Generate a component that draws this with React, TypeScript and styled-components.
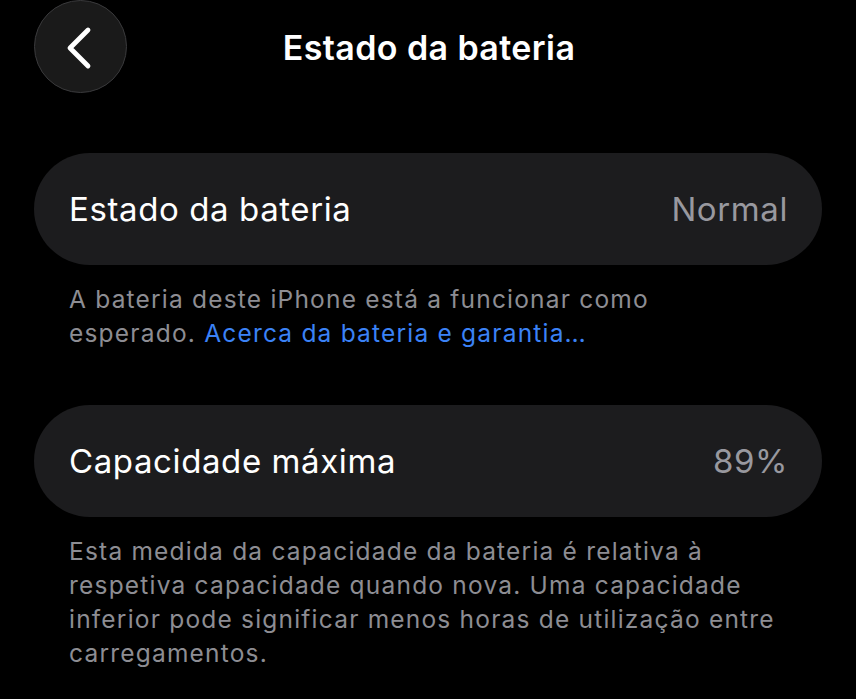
import React from 'react'
import styled, { createGlobalStyle } from 'styled-components'

const GlobalStyle = createGlobalStyle`
  html, body {
    margin: 0;
    padding: 0;
    background: #000;
  }
  body {
    font-family: Inter, "Noto Sans", "Liberation Sans", sans-serif;
    -webkit-font-smoothing: antialiased;
  }
`

function BackIcon() {
  return (
    <svg width="30" height="44" viewBox="0 0 30 44" fill="none">
      <path d="M24 4 L6 22 L24 40" stroke="#fff" strokeWidth="4.8" strokeLinecap="round" strokeLinejoin="round" />
    </svg>
  )
}

function App() {
  return (
    <Page>
      <GlobalStyle />
      <NavBar>
        <BackButton aria-label="Voltar">
          <BackIcon />
        </BackButton>
        <Title>Estado da bateria</Title>
      </NavBar>
      <Content>
        <Section>
          <Card>
            <Label>Estado da bateria</Label>
            <Value>Normal</Value>
          </Card>
          <Footnote>
            A bateria deste iPhone está a funcionar como<br />
            esperado. <Link>Acerca da bateria e garantia…</Link>
          </Footnote>
        </Section>
        <Section>
          <Card>
            <Label>Capacidade máxima</Label>
            <Value>89%</Value>
          </Card>
          <Footnote>
            Esta medida da capacidade da bateria é relativa à<br />
            respetiva capacidade quando nova. Uma capacidade<br />
            inferior pode significar menos horas de utilização entre<br />
            carregamentos.
          </Footnote>
        </Section>
      </Content>
    </Page>
  )
}

const Page = styled.div`
  width: 856px;
  min-height: 699px;
  background: #000;
  color: #fff;
  overflow: hidden;
`
const NavBar = styled.header`
  position: relative;
  height: 94px;
  display: flex;
  align-items: center;
  justify-content: center;
`
const BackButton = styled.button`
  position: absolute;
  left: 34px;
  top: 0;
  width: 93px;
  height: 93px;
  border-radius: 50%;
  background: #1a1a1a;
  border: 1.5px solid #3a3a3c;
  display: flex;
  align-items: center;
  justify-content: center;
  padding: 2px 4px 0 0;
  cursor: pointer;
`
const Title = styled.h1`
  margin: 0;
  font-size: 34px;
  font-weight: 600;
  letter-spacing: 0.4px;
  color: #fff;
  padding-left: 2px;
`
const Content = styled.main`
  display: flex;
  flex-direction: column;
  gap: 55px;
  padding: 59px 34px 0 34px;
`
const Section = styled.section`
  display: flex;
  flex-direction: column;
  gap: 17px;
`
const Card = styled.div`
  height: 112px;
  border-radius: 56px;
  background: #1c1c1e;
  display: flex;
  align-items: center;
  justify-content: space-between;
  padding: 0 34px 0 35px;
`
const Label = styled.span`
  font-size: 33px;
  color: #fff;
  letter-spacing: 0.6px;
`
const Value = styled.span`
  font-size: 33px;
  color: #98989f;
  letter-spacing: 0.6px;
`
const Footnote = styled.p`
  margin: 0;
  padding: 0 10px 0 35px;
  font-size: 24.5px;
  line-height: 34px;
  color: #8d8d93;
  letter-spacing: 1.2px;
  white-space: nowrap;
`
const Link = styled.a`
  color: #3b82f6;
  text-decoration: none;
`

export default App
